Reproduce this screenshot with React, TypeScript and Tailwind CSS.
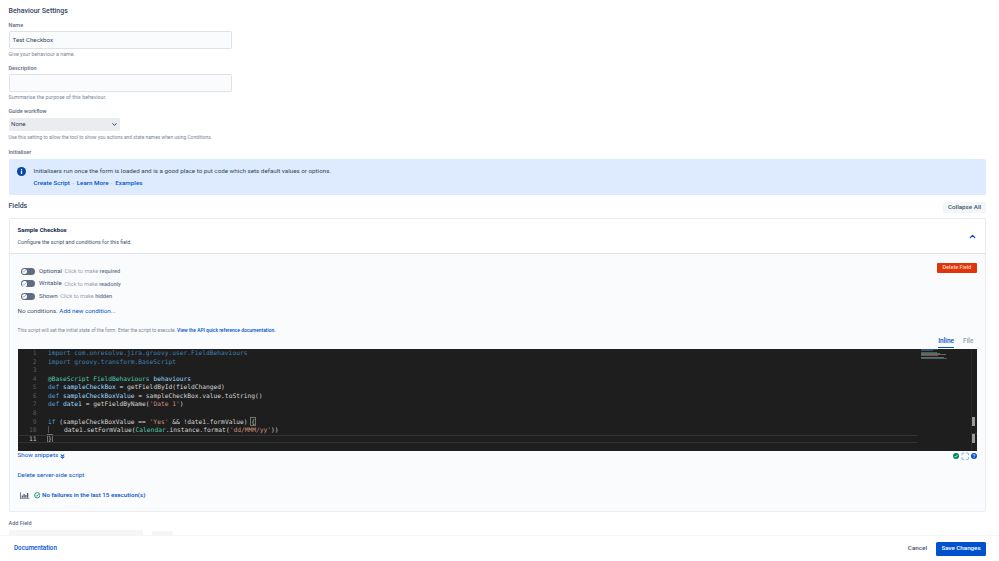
import React from 'react';
import { ChevronDown, ChevronUp, ChevronsDown, Maximize, Check } from 'lucide-react';

const kw = 'text-[#569cd6]';
const cls = 'text-[#4ec9b0]';
const str = 'text-[#ce9178]';
const ident = 'text-[#9cdcfe]';
const pkg = 'text-[#3f7fb0]';

// Script shown in the editor, one entry per line
const codeLines: React.ReactNode[] = [
  <><span className={pkg}>import com.onresolve.jira.groovy.user.FieldBehaviours</span></>,
  <><span className={pkg}>import groovy.transform.BaseScript</span></>,
  <></>,
  <><span className={cls}>@BaseScript FieldBehaviours</span> <span className={ident}>behaviours</span></>,
  <><span className={kw}>def</span> <span className={ident}>sampleCheckBox</span> = getFieldById(fieldChanged)</>,
  <><span className={kw}>def</span> <span className={ident}>sampleCheckBoxValue</span> = sampleCheckBox.value.toString()</>,
  <><span className={kw}>def</span> <span className={ident}>date1</span> = getFieldByName(<span className={str}>'Date 1'</span>)</>,
  <></>,
  <><span className={kw}>if</span> (sampleCheckBoxValue == <span className={str}>'Yes'</span> &amp;&amp; !date1.formValue) <span className="outline outline-[#6a7a6a] text-[#d4d4d4]">{'{'}</span></>,
  <><span className="border-l border-[#555]">{'    '}</span>date1.setFormValue(<span className={cls}>Calendar</span>.instance.format(<span className={str}>'dd/MMM/yy'</span>))</>,
  <><span className="outline outline-[#6a7a6a]">{'}'}</span></>,
];

const toggles = [
  { name: 'Optional', hint: 'Click to make', bold: 'required' },
  { name: 'Writable', hint: 'Click to make', bold: 'readonly' },
  { name: 'Shown', hint: 'Click to make', bold: 'hidden' },
];

function Label({ children }: { children: React.ReactNode }) {
  return <div className="text-[5.5px] leading-[9px] font-medium text-[#5e6c84]">{children}</div>;
}

function Help({ children }: { children: React.ReactNode }) {
  return <div className="text-[5.3px] leading-[9px] text-[#7a869a]">{children}</div>;
}

function Toggle() {
  return (
    <span className="flex items-center w-[14.5px] h-[7px] rounded-full bg-[#5e6c84] pl-[1px]">
      <span className="flex items-center justify-center w-[5.5px] h-[5.5px] rounded-full bg-white">
        <Check className="w-[4.5px] h-[4.5px] text-[#5e6c84]" strokeWidth={3} />
      </span>
    </span>
  );
}

function Minimap() {
  const rows = [
    'w-[17px] bg-[#2f5470]',
    'w-[12px] bg-[#2f5470]',
    '',
    'w-[16px] bg-[#2f6a5f]',
    'w-[19px] bg-[#666]',
    'w-[25px] bg-[#666]',
    'w-[17px] bg-[#7a5040]',
    '',
    'w-[23px] bg-[#666]',
    'w-[26px] bg-[#4a6070]',
  ];
  return (
    <div className="absolute left-[903px] top-0 w-[27px]">
      {rows.map((c, i) => (
        <div key={i} className="h-[1px]"><div className={`h-[1px] ${c}`} /></div>
      ))}
    </div>
  );
}

function StatsIcon() {
  return (
    <svg viewBox="0 0 10 7" className="w-[9.5px] h-[7px] text-[#344563]" fill="currentColor">
      <path d="M0 0h.7v6.3H10V7H0z" />
      <path d="M1.8 3.5h1.2v2.3H1.8zM3.7 2h1.2v3.8H3.7zM5.6 3h1.2v2.8H5.6zM7.5 .8h1.2v5H7.5z" />
    </svg>
  );
}

function InfoDot() {
  return (
    <svg viewBox="0 0 10 10" className="w-[9px] h-[9px] shrink-0">
      <circle cx="5" cy="5" r="5" fill="#0747a6" />
      <rect x="4.3" y="2.2" width="1.4" height="1.4" fill="#fff" />
      <rect x="4.3" y="4.2" width="1.4" height="3.6" fill="#fff" />
    </svg>
  );
}

function OkDot() {
  return (
    <svg viewBox="0 0 10 10" className="w-[6px] h-[6px]">
      <circle cx="5" cy="5" r="5" fill="#00875a" />
      <path d="M2.8 5.2 4.4 6.8 7.3 3.5" fill="none" stroke="#fff" strokeWidth="1.4" />
    </svg>
  );
}

function OkRing() {
  return (
    <svg viewBox="0 0 12 12" className="w-[6.5px] h-[6.5px]">
      <circle cx="6" cy="6" r="5" fill="none" stroke="#00875a" strokeWidth="1.5" />
      <path d="M3.6 6.2 5.3 7.9 8.5 4.4" fill="none" stroke="#00875a" strokeWidth="1.5" />
    </svg>
  );
}

function HelpDot() {
  return (
    <svg viewBox="0 0 10 10" className="w-[6px] h-[6px]">
      <circle cx="5" cy="5" r="5" fill="#0052cc" />
      <path d="M3.5 4a1.5 1.5 0 1 1 2.2 1.3c-.5.3-.7.5-.7 1.1" fill="none" stroke="#fff" strokeWidth="1.2" />
      <rect x="4.4" y="7.1" width="1.2" height="1.2" fill="#fff" />
    </svg>
  );
}

export default function App() {
  return (
    <div className="flex flex-col h-[561px] w-[999px] overflow-hidden bg-white text-[#42526e] font-['Roboto',sans-serif]">
      <div className="flex-1 overflow-hidden pl-[8.5px] pr-[13px] pt-[6px]">
        <h1 className="text-[7.05px] leading-[10px] font-medium text-[#344563]">Behaviour Settings</h1>

        <div className="mt-[5px]">
          <Label>Name</Label>
          <div className="flex items-center w-[223.5px] h-[18px] mt-[1px] px-[3px] pt-[1px] border border-[#dfe1e6] bg-[#fafbfc] rounded-[1.5px] text-[6.2px] text-[#344563]">Test Checkbox</div>
          <div className="mt-[1px]"><Help>Give your behaviour a name.</Help></div>
        </div>

        <div className="mt-[5px]">
          <Label>Description</Label>
          <div className="w-[223.5px] h-[18px] mt-[1px] border border-[#dfe1e6] bg-[#fafbfc] rounded-[1.5px]" />
          <div className="mt-[1px]"><Help>Summarise the purpose of this behaviour.</Help></div>
        </div>

        <div className="mt-[5px]">
          <Label>Guide workflow</Label>
          <div className="flex items-center justify-between w-[111.5px] h-[13px] mt-[2px] pl-[2.5px] pr-[2.2px] bg-[#ebecf0] rounded-[1.5px] text-[6.2px] text-[#344563]">
            None
            <ChevronDown className="w-[7px] h-[7px] text-[#172b4d]" strokeWidth={3} />
          </div>
          <div className="mt-[2px] text-[4.9px] leading-[9px] text-[#7a869a]">Use this setting to allow the tool to show you actions and state names when using Conditions.</div>
        </div>

        <div className="mt-[6px]"><Label>Initialiser</Label></div>

        <div className="flex gap-[8px] h-[36px] mt-[2px] pl-[8px] pt-[7.5px] bg-[#deebff] rounded-[1.5px]">
          <InfoDot />
          <div>
            <div className="text-[6.26px] leading-[9px] text-[#344563]">Initialisers run once the form is loaded and is a good place to put code which sets default values or options.</div>
            <div className="flex items-center gap-[2.5px] mt-[3px] text-[6.26px] leading-[9px] font-medium text-[#0052cc]">
              <span>Create Script</span><span className="text-[#7a869a]">·</span><span>Learn More</span><span className="text-[#7a869a]">·</span><span>Examples</span>
            </div>
          </div>
        </div>

        <div className="flex items-center justify-between mt-[7px] h-[11px]">
          <h2 className="text-[7px] leading-[9px] font-medium text-[#344563] mb-[3px]">Fields</h2>
          <button className="h-[11px] w-[43px] bg-[#f4f5f7] rounded-[1.5px] text-[6.25px] font-medium text-[#42526e]">Collapse All</button>
        </div>

        <div className="mt-[5px] h-[294px] border border-[#ebecf0] rounded-[2px] bg-[#fafbfc]">
          <div className="flex items-center justify-between h-[35px] pl-[8px] pr-[8.3px] border-b border-[#dfe1e6] bg-white rounded-t-[2px]">
            <div>
              <div className="text-[6.1px] leading-[9px] font-bold text-[#172b4d]">Sample Checkbox</div>
              <div className="mt-[3.5px] text-[5.36px] leading-[9px] text-[#42526e]">Configure the script and conditions for this field.</div>
            </div>
            <ChevronUp className="w-[9px] h-[9px] text-[#0052cc]" strokeWidth={3.5} />
          </div>

          <div className="px-[8px]">
            <div className="flex justify-between pt-[9px]">
              <div className="flex flex-col gap-[4px] pl-[3px] pt-[4px]">
                {toggles.map(t => (
                  <div key={t.name} className="flex items-center h-[8.5px]">
                    <Toggle />
                    <span className="ml-[4px] text-[6.2px] text-[#42526e]">{t.name}</span>
                    <span className="ml-[2.5px] text-[5.6px] text-[#97a0af]">{t.hint} <b className="font-medium text-[#6b778c]">{t.bold}</b></span>
                  </div>
                ))}
              </div>
              <button className="h-[9.5px] w-[40px] bg-[#de350b] rounded-[1px] text-[5.5px] leading-[9px] font-medium text-[#ffd2c7]">Delete Field</button>
            </div>

            <div className="mt-[6.5px] text-[6.24px] leading-[9px] text-[#42526e]">No conditions. <span className="text-[#0052cc]">Add new condition...</span></div>

            <div className="mt-[10px] h-[8px] text-[4.9px] leading-[8px] text-[#7a869a]">This script will set the initial state of the form. Enter the script to execute. <span className="font-medium text-[#0052cc]">View the API quick reference documentation.</span></div>

            <div className="flex items-end justify-end gap-[9px] h-[14px] pr-[3.5px] text-[6.5px] leading-[9px] font-medium">
              <span className="pb-[1px] border-b border-[#0052cc] text-[#0052cc] w-[16px] text-center">Inline</span>
              <span className="pb-[2px] text-[#97a0af]">File</span>
            </div>

            <div className="relative h-[101.5px] mt-[1px] bg-[#1e1e1e] overflow-hidden font-['DejaVu_Sans_Mono',monospace] text-[6.25px] leading-[8.57px] text-[#d4d4d4]">
              {codeLines.map((line, i) => (
                <div key={i} className="relative flex h-[8.57px] whitespace-pre">
                  {i === 10 && <div className="absolute left-0 top-0 w-[899px] h-[8.6px] border-y border-[#333]" />}
                  <span className={`w-[19px] text-right ${i === 10 ? 'text-[#c6c6c6]' : 'text-[#5a5a5a]'}`}>{i + 1}</span>
                  <span className="ml-[11.5px]">{line}</span>
                </div>
              ))}
              <Minimap />
              <div className="absolute left-[953px] top-0 bottom-0 w-[1px] bg-[#2a2a2a]" />
              <div className="absolute left-[953px] right-0 top-[83.5px] h-[1px] bg-[#3a3a3a]" />
              <div className="absolute right-[2.5px] top-[68.3px] w-[3px] h-[9px] bg-[#9a9a9a]" />
              <div className="absolute right-[2.5px] top-[85px] w-[3px] h-[9px] bg-[#9a9a9a]" />
            </div>

            <div className="flex items-center justify-between h-[10px] mt-[0.5px]">
              <span className="flex items-center gap-[1px] text-[6.24px] text-[#0052cc]">Show snippets <ChevronsDown className="w-[7px] h-[7px]" strokeWidth={3.5} /></span>
              <span className="flex items-center gap-[1.45px] pr-[0.3px]">
                <OkDot />
                <Maximize className="w-[8.5px] h-[8.5px] text-[#5e8fd0]" strokeWidth={2} />
                <HelpDot />
              </span>
            </div>

            <div className="mt-[9.5px] text-[6.25px] leading-[9px] text-[#0052cc]">Delete server-side script</div>

            <div className="flex items-center mt-[11.3px] pl-[2.5px] h-[9px]">
              <StatsIcon />
              <span className="ml-[4px]"><OkRing /></span>
              <span className="ml-[2px] text-[6.2px] font-medium text-[#0052cc]">No failures in the last 15 execution(s)</span>
            </div>
          </div>
        </div>

        <div className="mt-[7px]"><Label>Add Field</Label></div>
        <div className="flex gap-[9px] mt-[2px]">
          <div className="w-[134px] h-[14px] bg-[#f4f5f7] rounded-[1.5px]" />
          <div className="w-[21px] h-[14px] mt-[1px] bg-[#f4f5f7] rounded-[1.5px]" />
        </div>
      </div>

      <div className="relative flex items-center justify-between h-[26px] shrink-0 pl-[14px] pr-[13px] bg-white border-t border-[#f4f5f7]">
        <span className="pt-[1px] text-[6.27px] font-medium text-[#0052cc]">Documentation</span>
        <div className="flex items-center gap-[9px]">
          <span className="pt-[1px] text-[6.25px] font-medium text-[#42526e]">Cancel</span>
          <button className="w-[50px] h-[14px] bg-[#0052cc] rounded-[1.5px] text-[6.2px] font-medium text-white">Save Changes</button>
        </div>
      </div>
    </div>
  );
}
